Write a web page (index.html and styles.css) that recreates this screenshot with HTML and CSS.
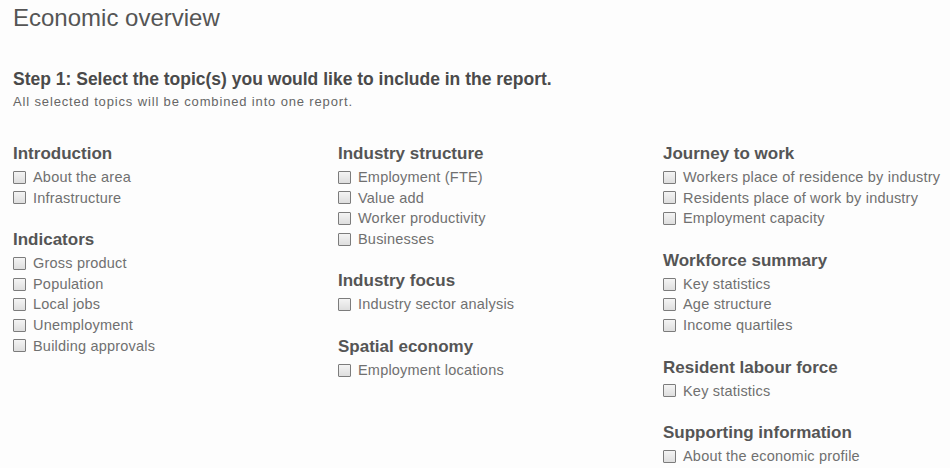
FILE: index.html
```html
<!DOCTYPE html>
<html>
  <head>
    <title>Economic overview</title>
    <meta name="viewport" content="width=device-width, initial-scale=1" />
    <link rel="stylesheet" href="styles.css">
  </head>
  <body>
    <div class="page">
      <h1>Economic overview</h1>
      <h2 class="step">Step 1: Select the topic(s) you would like to include in the report.</h2>
      <p class="hint">All selected topics will be combined into one report.</p>
      <form class="topics">
        <div class="column">
          <div class="group">
            <h3>Introduction</h3>
            <label class="item"><input type="checkbox" />About the area</label>
            <label class="item"><input type="checkbox" />Infrastructure</label>
          </div>
          <div class="group">
            <h3>Indicators</h3>
            <label class="item"><input type="checkbox" />Gross product</label>
            <label class="item"><input type="checkbox" />Population</label>
            <label class="item"><input type="checkbox" />Local jobs</label>
            <label class="item"><input type="checkbox" />Unemployment</label>
            <label class="item"><input type="checkbox" />Building approvals</label>
          </div>
        </div>
        <div class="column">
          <div class="group">
            <h3>Industry structure</h3>
            <label class="item"><input type="checkbox" />Employment (FTE)</label>
            <label class="item"><input type="checkbox" />Value add</label>
            <label class="item"><input type="checkbox" />Worker productivity</label>
            <label class="item"><input type="checkbox" />Businesses</label>
          </div>
          <div class="group">
            <h3>Industry focus</h3>
            <label class="item"><input type="checkbox" />Industry sector analysis</label>
          </div>
          <div class="group">
            <h3>Spatial economy</h3>
            <label class="item"><input type="checkbox" />Employment locations</label>
          </div>
        </div>
        <div class="column">
          <div class="group">
            <h3>Journey to work</h3>
            <label class="item"><input type="checkbox" />Workers place of residence by industry</label>
            <label class="item"><input type="checkbox" />Residents place of work by industry</label>
            <label class="item"><input type="checkbox" />Employment capacity</label>
          </div>
          <div class="group">
            <h3>Workforce summary</h3>
            <label class="item"><input type="checkbox" />Key statistics</label>
            <label class="item"><input type="checkbox" />Age structure</label>
            <label class="item"><input type="checkbox" />Income quartiles</label>
          </div>
          <div class="group">
            <h3>Resident labour force</h3>
            <label class="item"><input type="checkbox" />Key statistics</label>
          </div>
          <div class="group">
            <h3>Supporting information</h3>
            <label class="item"><input type="checkbox" />About the economic profile</label>
          </div>
        </div>
      </form>
    </div>
  </body>
</html>
```

FILE: styles.css
```css
*{
  box-sizing:border-box;
}
body{
  font-family: "Liberation Sans", Arial, sans-serif;
  background-color: #fdfdfd;
  color: #555;
  padding:0;
  margin:0;
}
.page{
  padding: 4px 0 0 13px;
}
h1{
  font-size:24px;
  font-weight:normal;
  line-height:28px;
  margin:0;
  color:#555;
}
.step{
  font-size:17.5px;
  font-weight:bold;
  line-height:22px;
  margin:36px 0 0;
  color:#4a4a4a;
}
.hint{
  font-size:13px;
  line-height:16px;
  letter-spacing:0.85px;
  margin:4px 0 0;
  color:#666;
}
.topics{
  display:grid;
  grid-template-columns:325px 325px 1fr;
  margin-top:33px;
}
.column{
  display:flex;
  flex-direction:column;
  gap:21px;
}
.group{
  display:flex;
  flex-direction:column;
}
.group h3{
  font-size:17px;
  font-weight:bold;
  line-height:22px;
  margin:0 0 2px;
  color:#555;
}
.item{
  display:flex;
  align-items:center;
  white-space:nowrap;
  font-size:14.5px;
  letter-spacing:0.2px;
  line-height:20.6px;
  color:#707070;
}
.item input{
  appearance:none;
  -webkit-appearance:none;
  width:13px;
  height:13px;
  margin:0 7px 0 0;
  border:1px solid #7c7c7c;
  border-radius:1px;
  background:linear-gradient(#f4f4f4, #dedede);
  flex-shrink:0;
}
```
